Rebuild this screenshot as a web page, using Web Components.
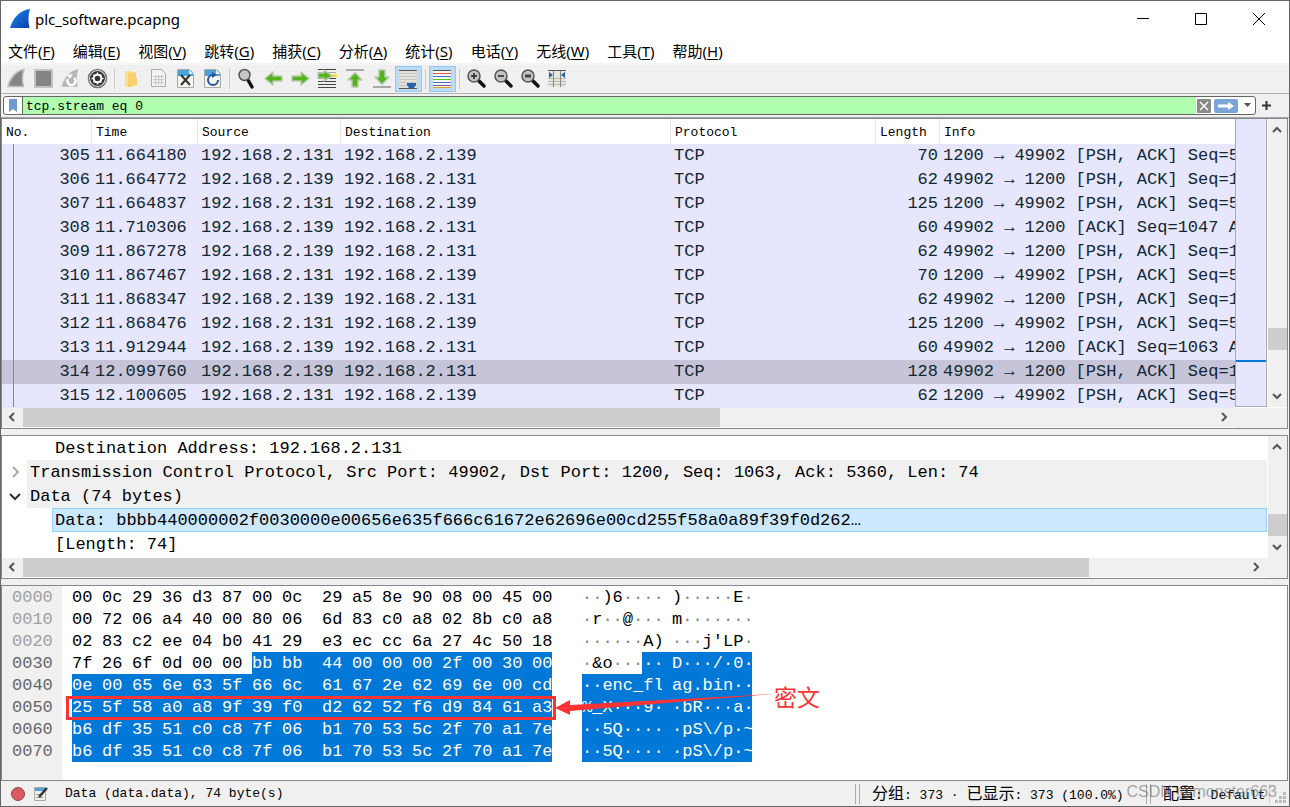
<!DOCTYPE html>
<html lang="zh-CN">
<head>
<meta charset="utf-8">
<title>plc_software.pcapng</title>
<style>
html, body { margin: 0; min-height: 100%; }
body {
  background: #666;
  --ui: "Noto Sans", "Noto Sans CJK SC", sans-serif;
  --mono: "Liberation Mono", "Noto Sans CJK SC", monospace;
  --chrome: #f0f0f0;
  --edge: #828790;
}
</style>
</head>
<body>
<capture-window></capture-window>
<script>
const define = (name, html, setup) => {
  const template = document.createElement('template');
  template.innerHTML = html;
  customElements.define(name, class extends HTMLElement {
    constructor() {
      super();
      this.attachShadow({ mode: 'open' }).append(template.content.cloneNode(true));
    }
    connectedCallback() {
      if (setup && !this.ready) { this.ready = true; setup(this, this.shadowRoot); }
    }
  });
};

const page = '<path d="M3.5 1.5h10l4 4v13h-14z" fill="#f2f2f2" stroke="#aaa"/>';
const bluePage = '<path d="M2.5 1.5h12l4 4v14h-16z" fill="#f5f6ee" stroke="#a5aaa8"/><path d="M3 2h11l4 4v2H3z" fill="#49a4dc"/><path d="M14 2v4h4z" fill="#e4f2fa"/>';
const arrowR = 'M2 8h9V4l8 6.5-8 6.5v-4H2z';
const lens = '<path d="m13 13 5 5" stroke="#111" stroke-width="3.5" stroke-linecap="round"/><circle cx="8" cy="8" r="6" fill="#c3c3c3" stroke="#555" stroke-width="1.5"/>';
const green = 'fill="#55b41c" stroke="#b9c9ae" stroke-width="1.5" stroke-linejoin="round"';
const lines = (colors, from) => colors.map((c, i) => `<path d="M1 ${from + i * 3}h18v1H1z" fill="${c}"/>`).join('');
const ICONS = {
  logo: '<defs><linearGradient id="g" x1="0" y1="0" x2="1" y2="1"><stop offset="0" stop-color="#1c86f2"/><stop offset="1" stop-color="#0b3fa8"/></linearGradient></defs><path d="M0 19C3 9 10 1 20 0c-2 6-2 12-.5 19z" fill="url(#g)"/>',
  fin: '<path d="M2 18.5C4 10 10 3 18 1.5c-2 5-2 11-.5 17z" fill="#858585" stroke="#bcbcbc" stroke-width="1.5"/>',
  stop: '<path d="M2 2h17v17H2z" fill="#858585" stroke="#c3c3c3" stroke-width="2"/>',
  restart: '<path d="M2 18.5C4 10 10 3 18 1.5c-2 5-2 11-.5 17z" fill="#b4b4b4" stroke="#c4c4c4"/><path d="M8 11a4 4 0 1 0 6-1" fill="none" stroke="#fff" stroke-width="2.5"/><path d="m7 7 6-1-3 5z" fill="#fff"/>',
  options: '<circle cx="10.5" cy="10.5" r="9" fill="#fff" stroke="#777" stroke-width="1.5"/><circle cx="10.5" cy="10.5" r="7.5" fill="#333"/><circle cx="10.5" cy="10.5" r="3.8" fill="none" stroke="#fff" stroke-width="2"/><path d="M10.5 4.5v2m0 8v2M4.5 10.5h2m8 0h2M6.5 6.5l1 1m6 6 1 1m0-8-1 1m-6 6-1 1" stroke="#fff" stroke-width="1.5"/>',
  folder: '<path d="M4 3h7l1 2v14H4z" fill="#ffe08a"/><path d="m7 5 8-1v5l1 1v7l-4 1-5 1z" fill="#f7d071"/>',
  save: page + '<path d="M5 8.5h11M5 11.5h11M5 14.5h11M7.5 7v10M10.5 7v10M13.5 7v10" stroke="#c8c8c8"/>',
  close: bluePage + '<path d="m6 7 9 10m0-10L6 17" stroke="#333" stroke-width="2"/>',
  reload: bluePage + '<path d="M11 7a5 5 0 1 0 5 5" fill="none" stroke="#2c5596" stroke-width="2"/><path d="m10 4 5 3-5 3z" fill="#2c5596"/>',
  find: '<path d="m12 12 4 7" stroke="#111" stroke-width="3.5" stroke-linecap="round"/><circle cx="8.5" cy="7" r="5.5" fill="#c6c6c6" stroke="#555" stroke-width="1.5"/>',
  back: `<path d="${arrowR}" transform="matrix(-1 0 0 1 21 0)" ${green}/>`,
  forward: `<path d="${arrowR}" ${green}/>`,
  goto: lines(['#444', '#aaa', '#aaa', '#444', '#444', '#444', '#444'], 1) + '<path d="M13 6h7v3h-7z" fill="#f8df3c"/><path d="M1 5h6V2l8 6-8 5v-3H1z" ' + green + '/>',
  first: '<path d="M2 2h18" stroke="#aaa" stroke-width="2"/><path d="M11 4.5 18 12h-4v7H8v-7H4z" ' + green + '/>',
  last: '<path d="M2 19h18" stroke="#aaa" stroke-width="2"/><path d="M11 16.5 18 9h-4V2H8v7H4z" ' + green + '/>',
  scroll: '<path d="M1 2h18v18H1z" fill="#e1e2dc"/>' + lines(['#555', '#c4c4c0', '#c4c4c0', '#c4c4c0', '#c4c4c0', '#c4c4c0', '#555'], 2) + '<path d="M9 15h9v2l-2 3h-5l-2-3z" fill="#2862ad"/>',
  colors: '<path d="M1 2h18v18H1z" fill="#f5f5f0"/>' + lines(['#555', '#ef4f4f', '#4176c8', '#4bc91f', '#4176c8', '#8a56a8', '#d5a31c'], 2).replace('M1 20', 'M1 19'),
  zoomin: lens + '<path d="M5 8h6M8 5v6" stroke="#222" stroke-width="1.5"/>',
  zoomout: lens + '<path d="M5 8h6" stroke="#222" stroke-width="1.5"/>',
  zoomfit: lens + '<path d="M5 6.5h6v3H5z" fill="#444"/>',
  resize: '<path d="M1 2h18v17H1z" fill="#e6e6df"/><path d="M1 2.5h18" stroke="#555"/><path d="M1 10.5h18M1 13.5h18M1 16.5h18" stroke="#bbb"/><path d="M6.5 3v16M13.5 3v16" stroke="#888"/><path d="m2 4 4 3-4 3zM18 4l-4 3 4 3z" fill="#2862ad"/>'
};

define('app-icon', `
<style>:host { display: block; width: 21px; height: 21px; } svg { display: block; overflow: visible; }</style>
<svg viewBox="0 0 21 21" width="21" height="21" aria-hidden="true"></svg>`,
(el, root) => { root.querySelector('svg').innerHTML = ICONS[el.getAttribute('name')]; });

define('title-bar', `
<style>
:host { display: flex; align-items: center; height: 36px; padding-left: 9px; background: #fff; font: 15px/20px var(--ui); color: #000; }
h1 { flex: 1; margin: 0 0 0 4px; font: inherit; }
button { width: 58px; height: 36px; padding: 0; border: 0; background: none; display: grid; place-items: center; }
nav { display: flex; margin-right: 1px; }
</style>
<app-icon name="logo"></app-icon>
<h1><slot></slot></h1>
<nav aria-label="窗口">
<button aria-label="最小化"><svg width="12" height="12"><path d="M0 5.5h12" stroke="#000"/></svg></button>
<button aria-label="最大化"><svg width="12" height="12"><path d="M.5.5h11v11H.5z" fill="none" stroke="#000"/></svg></button>
<button aria-label="关闭"><svg width="12" height="12"><path d="m0 0 12 12M12 0 0 12" stroke="#000"/></svg></button>
</nav>`);

define('menu-bar', `
<style>
:host { display: block; background: #fff; border-bottom: 2px solid #f5f5f5; }
nav { display: flex; gap: 18px; height: 26px; padding-left: 7px; }
button { padding: 0; border: 0; background: none; color: #000; font: 15px/28px var(--ui); white-space: nowrap; }
u { text-underline-offset: 2px; }
</style><nav></nav>`,
(el, root) => {
  root.querySelector('nav').innerHTML = ['文件F', '编辑E', '视图V', '跳转G', '捕获C', '分析A', '统计S', '电话Y', '无线W', '工具T', '帮助H']
    .map(t => `<button>${t.slice(0, 2)}(<u>${t[2]}</u>)</button>`).join('');
});

define('tool-bar', `
<style>
:host { display: flex; align-items: center; height: 28px; padding-left: 2px; background: var(--chrome); border-bottom: 1px solid #b0b0b0; }
button { box-sizing: border-box; width: 27px; height: 26px; padding: 0 0 1px; border: 1px solid transparent; background: none; display: grid; place-items: center; }
button.on { background: #bddcf4; border-color: #90c8f6; }
i { width: 1px; height: 20px; margin: 0 3px; background: #ccc; }
</style>`,
(el, root) => {
  const items = 'fin stop restart options | folder save close reload | find back forward goto first last scroll* | colors* | zoomin zoomout zoomfit resize'.split(' ');
  root.innerHTML += items.map(n => n === '|' ? '<i></i>'
    : `<button aria-label="${n.replace('*', '')}"${n.endsWith('*') ? ' class="on"' : ''}><app-icon name="${n.replace('*', '')}"></app-icon></button>`).join('');
});

define('filter-bar', `
<style>
:host { display: flex; align-items: center; gap: 6px; height: 23px; padding: 0 18px 0 2px; background: var(--chrome); border-bottom: 1px solid #a8a8a8; }
form { flex: 1; display: flex; box-sizing: border-box; height: 19px; border: 1px solid #666; border-radius: 3px; background: #fff; overflow: hidden; }
input { flex: 1; min-width: 0; padding: 2px 3px 0; border: 0; border-left: 1px solid #666; background: #afffaf; font: 13px/15px var(--mono); color: #000; outline: 0; }
button { padding: 0; border: 0; background: none; display: grid; place-items: center; height: 17px; }
.mark { width: 18px; } .clear { width: 16px; } .go { width: 28px; } .more { width: 15px; }
</style>
<form>
<button type="button" class="mark" aria-label="书签"><svg width="10" height="13"><path d="M1 0h8v13l-4-3-4 3z" fill="#6f9bd1"/></svg></button>
<input aria-label="显示过滤器" value="tcp.stream eq 0" spellcheck="false">
<button type="button" class="clear" aria-label="清除"><svg width="14" height="15"><rect width="14" height="14" y="1" rx="1" fill="#888b86"/><path d="m3 4 8 8m0-8-8 8" stroke="#fff" stroke-width="1.5"/></svg></button>
<button type="button" class="go" aria-label="应用"><svg width="24" height="15"><rect width="24" height="14" y="1" rx="2" fill="#7ba5d8"/><path d="M4 6.5h10V4l6 4-6 4V9.5H4z" fill="#fff"/></svg></button>
<button type="button" class="more" aria-label="历史"><svg width="7" height="5"><path d="M0 0h7L3.5 4z" fill="#555"/></svg></button>
</form>
<button aria-label="添加"><svg width="9" height="9"><path d="M4.5 0v9M0 4.5h9" stroke="#333" stroke-width="2"/></svg></button>`);

define('scroll-bar', `
<style>
:host { display: flex; box-sizing: border-box; background: var(--chrome); }
:host([vertical]) { flex-direction: column; width: 19px; }
:host(:not([vertical])) { height: 19px; }
button { flex: none; width: 21px; height: 19px; padding: 0; border: 0; background: none; display: grid; place-items: center; }
:host([vertical]) button { width: 19px; height: 21px; }
.track { flex: 1; display: flex; flex-direction: inherit; }
.thumb { background: #cdcdcd; }
svg { fill: none; stroke: #555; stroke-width: 2; }
</style>
<button aria-label="向前"><svg width="11" height="11"><path/></svg></button>
<div class="track"><div class="before"></div><div class="thumb"></div><div class="after"></div></div>
<button aria-label="向后"><svg width="11" height="11"><path/></svg></button>`,
(el, root) => {
  const vertical = el.hasAttribute('vertical');
  const [a, b] = root.querySelectorAll('path');
  a.setAttribute('d', vertical ? 'm1 8 4-4 4 4' : 'M7 1 3 5l4 4');
  b.setAttribute('d', vertical ? 'm1 3 4 4 4-4' : 'm3 1 4 4-4 4');
  const [start, size] = el.getAttribute('range').split(' ').map(Number);
  root.querySelector('.before').style.flex = `${start} 1 0`;
  root.querySelector('.thumb').style.flex = `${size} 1 0`;
  root.querySelector('.after').style.flex = `${1000 - start - size} 1 0`;
});

define('packet-list', `
<style>
:host { display: grid; grid-template-columns: minmax(0, 1fr) 32px auto; grid-template-rows: auto 20px; background: #fff; border: 1px solid var(--edge); }
.view { overflow: hidden; position: relative; background: #fff; }
.view::after { content: ""; position: absolute; left: 11px; top: 25px; bottom: 1px; width: 1px; background: #888; }
table { width: 100%; table-layout: fixed; border-collapse: collapse; color: #12272e; font: 17px/24px var(--mono); }
th { height: 23px; padding: 2px 0 0 4px; text-align: left; font: 13px/23px var(--mono); color: #000; box-shadow: inset -1px 0 #e5e5e5; }
th:last-child { box-shadow: none; }
td { height: 24px; padding: 0 2px 0 3px; overflow: hidden; white-space: pre; background: #e7e6ff; }
td.n { text-align: right; }
tr.sel td { background: #c6c4d8; }
.map { position: relative; margin-bottom: 1px; box-sizing: border-box; border: solid #aaa; border-width: 0 1px 1px; background: #e7e6ff; }
.map::after { content: ""; position: absolute; left: 0; right: 0; top: 84%; height: 2px; background: #0078d7; }
scroll-bar[vertical] { margin: 0 0 1px 1px; }
.corner { grid-column: 2 / 4; background: var(--chrome); }
</style>
<div class="view"><table>
<colgroup><col style="width:90px"><col style="width:106px"><col style="width:143px"><col style="width:330px"><col style="width:205px"><col style="width:64px"><col></colgroup>
<thead><tr><th>No.</th><th>Time</th><th>Source</th><th>Destination</th><th>Protocol</th><th>Length</th><th>Info</th></tr></thead>
<tbody></tbody></table></div>
<div class="map"></div>
<scroll-bar vertical range="764 90"></scroll-bar>
<scroll-bar range="0 585"></scroll-bar>
<div class="corner"></div>`,
(el, root) => {
  const plc = '192.168.2.131', pc = '192.168.2.139';
  const rows = [
    [305, '11.664180', 0, 70, 'PSH, ACK', '51'], [306, '11.664772', 1, 62, 'PSH, ACK', '10'],
    [307, '11.664837', 0, 125, 'PSH, ACK', '52'], [308, '11.710306', 1, 60, 'ACK', '1047 Ac'],
    [309, '11.867278', 1, 62, 'PSH, ACK', '10'], [310, '11.867467', 0, 70, 'PSH, ACK', '52'],
    [311, '11.868347', 1, 62, 'PSH, ACK', '10'], [312, '11.868476', 0, 125, 'PSH, ACK', '52'],
    [313, '11.912944', 1, 60, 'ACK', '1063 Ac'], [314, '12.099760', 1, 128, 'PSH, ACK', '10'],
    [315, '12.100605', 0, 62, 'PSH, ACK', '53']];
  root.querySelector('tbody').innerHTML = rows.map(([no, time, out, len, flags, seq]) =>
    `<tr${no === 314 ? ' class="sel"' : ''}><td class="n">${no}</td><td>${time}</td><td>${out ? pc : plc}</td><td>${out ? plc : pc}</td><td>TCP</td><td class="n">${len}</td><td>${out ? '49902 → 1200' : '1200 → 49902'} [${flags}] Seq=${seq}</td></tr>`).join('');
});

define('tree-row', `
<style>
:host { display: flex; height: 24px; font: 17px/24px var(--mono); color: #000; white-space: pre; }
button { width: 25px; height: 24px; padding: 0; border: 0; background: none; display: grid; place-items: center; }
svg { fill: none; stroke: #aaa; stroke-width: 2; }
:host([open]) svg { stroke: #333; }
div { flex: 1; box-sizing: border-box; padding: 1px 0 0 3px; background: var(--chrome); overflow: hidden; }
:host([leaf]) button { display: none; }
:host([leaf]) div { margin-left: 50px; background: none; }
:host([selected]) div { background: #cce8ff; border: 1px solid #99d1ff; line-height: 22px; padding-left: 2px; }
</style>
<button aria-label="展开"><svg width="12" height="12"><path/></svg></button><div><slot></slot></div>`,
(el, root) => root.querySelector('path').setAttribute('d', el.hasAttribute('open') ? 'm1 4 5 5 5-5' : 'm4 1 5 5-5 5'));

define('packet-details', `
<style>
:host { display: grid; grid-template-columns: minmax(0, 1fr) auto; grid-template-rows: auto 20px; background: #fff; border: 1px solid var(--edge); }
.view { padding-bottom: 2px; }
scroll-bar[vertical] { margin-left: 1px; }
.corner { background: var(--chrome); }
</style>
<div class="view">
<tree-row leaf>Destination Address: 192.168.2.131</tree-row>
<tree-row>Transmission Control Protocol, Src Port: 49902, Dst Port: 1200, Seq: 1063, Ack: 5360, Len: 74</tree-row>
<tree-row open>Data (74 bytes)</tree-row>
<tree-row leaf selected>Data: bbbb440000002f0030000e00656e635f666c61672e62696e00cd255f58a0a89f39f0d262…</tree-row>
<tree-row leaf>[Length: 74]</tree-row>
</div>
<scroll-bar vertical range="710 280"></scroll-bar>
<scroll-bar range="0 872"></scroll-bar>
<div class="corner"></div>`);

define('hex-view', `
<style>
:host { display: block; position: relative; background: linear-gradient(90deg, var(--chrome) 60px, #fff 60px); border: 1px solid var(--edge); }
table { table-layout: fixed; width: 750px; border-collapse: collapse; font: 17px/20px var(--mono); color: #000; }
th, td { height: 20px; padding: 2px 0 0; font-weight: 400; text-align: left; white-space: pre; overflow: hidden; }
th { padding-left: 10px; color: #666; }
th.dim { color: #a0a0a0; }
i { font-style: normal; color: #888; }
.sel, .sel i { background: #0078d7; color: #fff; }
td.part { background: linear-gradient(90deg, #fff 60px, #0078d7 60px); }
.box { position: absolute; left: 64px; top: 110px; width: 484px; height: 18px; border: 3px solid #f33; }
.arrow { position: absolute; left: 553px; top: 106px; }
.note { position: absolute; left: 772px; top: 94px; font: 23px/32px "Noto Sans CJK SC", sans-serif; color: #f33; }
</style>
<table><colgroup></colgroup><tbody></tbody></table>
<div class="box"></div>
<svg class="arrow" width="220" height="24"><path d="M0 16 15 8v5L218 2 15 19v4z" fill="#f33"/></svg>
<div class="note">密文</div>`,
(el, root) => {
  const widths = [70, ...Array(7).fill(30), 40, ...Array(7).fill(30), 20, 30, 80, 10, 80];
  root.querySelector('colgroup').innerHTML = widths.map(w => `<col style="width:${w}px">`).join('');
  const dump = [
    ['00 0c 29 36 d3 87 00 0c 29 a5 8e 90 08 00 45 00', '··)6····', ')·····E·'],
    ['00 72 06 a4 40 00 80 06 6d 83 c0 a8 02 8b c0 a8', '·r··@···', 'm·······'],
    ['02 83 c2 ee 04 b0 41 29 e3 ec cc 6a 27 4c 50 18', '······A)', "···j'LP·"],
    ['7f 26 6f 0d 00 00 bb bb 44 00 00 00 2f 00 30 00', '·&o·····', 'D···/·0·'],
    ['0e 00 65 6e 63 5f 66 6c 61 67 2e 62 69 6e 00 cd', '··enc_fl', 'ag.bin··'],
    ['25 5f 58 a0 a8 9f 39 f0 d2 62 52 f6 d9 84 61 a3', '%_X···9·', '·bR···a·'],
    ['b6 df 35 51 c0 c8 7f 06 b1 70 53 5c 2f 70 a1 7e', '··5Q····', '·pS\\/p·~'],
    ['b6 df 35 51 c0 c8 7f 06 b1 70 53 5c 2f 70 a1 7e', '··5Q····', '·pS\\/p·~']];
  const chars = t => t.replace('&', '&amp;').replace(/·+/g, '<i>$&</i>');
  root.querySelector('tbody').innerHTML = dump.map(([bytes, a, b], r) => {
    const sel = r > 3 ? ' class="sel"' : '', selB = r > 2 ? ' class="sel"' : '';
    const first = r === 3 ? `<td class="part">${chars(a.slice(0, 6))}<span class="sel">${a.slice(6)}</span></td>` : `<td${sel}>${chars(a)}</td>`;
    return `<tr><th${r < 3 ? ' class="dim"' : ''}>00${r}0</th>` +
      bytes.split(' ').map((x, i) => `<td${r * 16 + i >= 54 ? ' class="sel"' : ''}>${x}</td>`).join('') +
      `<td></td>${first}<td${selB}></td><td${selB}>${chars(b)}</td></tr>`;
  }).join('');
});

define('status-bar', `
<style>
:host { display: flex; align-items: center; position: relative; height: 25px; background: var(--chrome); font: 13px/25px var(--mono); color: #000; white-space: pre; }
nav { display: flex; margin-left: 4px; }
button { width: 24px; height: 24px; padding: 0; border: 0; background: none; display: grid; place-items: center; }
.main { flex: 1; padding-left: 12px; }
.cell { box-sizing: border-box; height: 20px; line-height: 22px; padding-left: 16px; border-left: 1px solid #aaa; box-shadow: inset 3px 0 var(--chrome), inset 4px 0 #aaa; }
.counts { width: 291px; }
.profile { width: 124px; border-right: 1px solid #ccc; }
.cell span { font-size: 16px; }
.grip { margin: 8px 3px 0 5px; }
.mark { position: absolute; right: 12px; top: 0; font: 16px/22px "Liberation Sans", sans-serif; color: rgba(110, 110, 110, .6); }
</style>
<nav aria-label="状态">
<button aria-label="专家信息"><svg width="16" height="16"><circle cx="9" cy="8" r="6.5" fill="#dc5a5e" stroke="#8c4545"/></svg></button>
<button aria-label="捕获注释"><svg width="16" height="16"><path d="M1.5 1.5h11v13h-11z" fill="#eef0ea" stroke="#aaa"/><path d="M2 2h10v3H2z" fill="#49a4dc"/><path d="M3 8.5h7M3 11.5h7" stroke="#999"/><path d="m6 11 8-9" stroke="#333" stroke-width="2.5"/></svg></button>
</nav>
<div class="main">Data (data.data), 74 byte(s)</div>
<div class="cell counts"><span>分组</span>: 373 · <span>已显示</span>: 373 (100.0%)</div>
<div class="cell profile"><span>配置</span>: Default</div>
<svg class="grip" width="11" height="11"><path d="M8 0h3v3H8zM8 4h3v3H8zM4 4h3v3H4zM8 8h3v3H8zM4 8h3v3H4zM0 8h3v3H0z" fill="#bbb"/></svg>
<div class="mark">CSDN @monster663</div>`);

define('capture-window', `
<style>
:host { display: flex; flex-direction: column; box-sizing: border-box; min-height: 100vh; padding: 1px; }
main { flex: 1; display: flex; flex-direction: column; gap: 6px; padding-right: 1px; background: var(--chrome); }
hex-view { flex: 1; }
</style>
<title-bar>plc_software.pcapng</title-bar>
<menu-bar></menu-bar>
<tool-bar></tool-bar>
<filter-bar></filter-bar>
<main><packet-list></packet-list><packet-details></packet-details><hex-view></hex-view></main>
<status-bar></status-bar>`);
</script>
</body>
</html>
